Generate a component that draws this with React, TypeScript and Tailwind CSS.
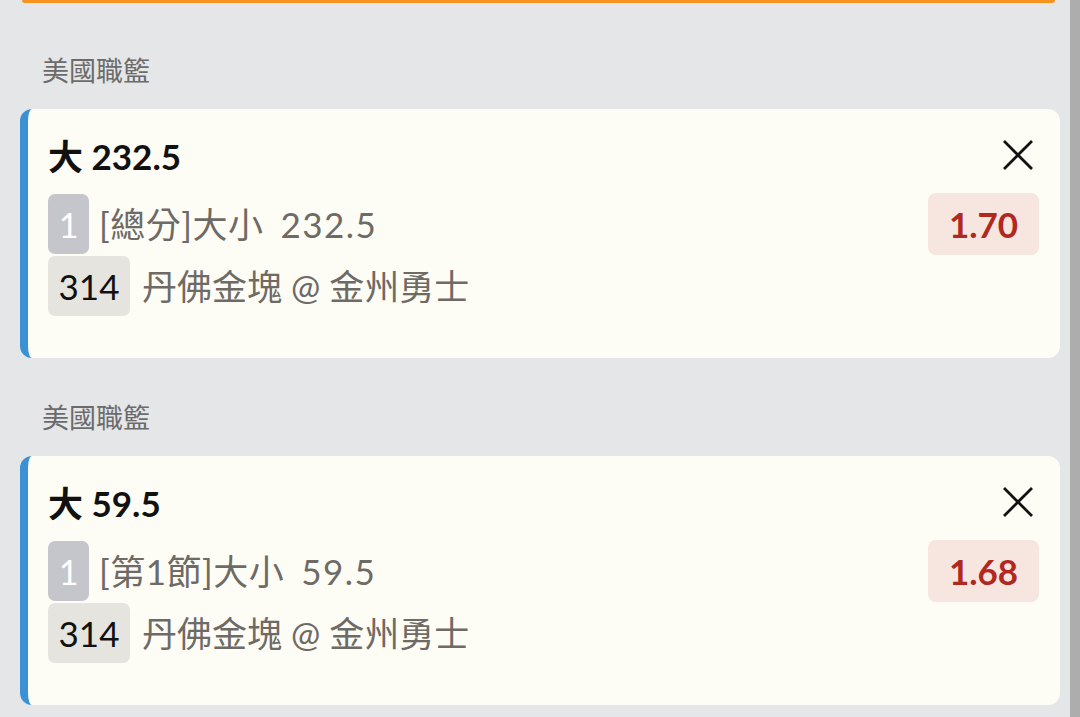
const font = { fontFamily: 'Lato, "Noto Sans CJK TC", sans-serif' };

type Bet = {
  league: string;
  title: string;
  period: string;
  line: string;
  odds: string;
  code: string;
  match: string;
};

const bets: Bet[] = [
  {
    league: "美國職籃",
    title: "大 232.5",
    period: "[總分]大小",
    line: "232.5",
    odds: "1.70",
    code: "314",
    match: "丹佛金塊 @ 金州勇士",
  },
  {
    league: "美國職籃",
    title: "大 59.5",
    period: "[第1節]大小",
    line: "59.5",
    odds: "1.68",
    code: "314",
    match: "丹佛金塊 @ 金州勇士",
  },
];

function CloseIcon() {
  return (
    <svg width="32" height="32" viewBox="0 0 32 32" fill="none">
      <path d="M2 2L30 30M30 2L2 30" stroke="#111" strokeWidth="2.8" />
    </svg>
  );
}

function BetCard({ bet }: { bet: Bet }) {
  return (
    <section>
      <div className="h-[36px] pl-[22px] text-[27px] leading-[36px] text-[#6b6b6b]">
        {bet.league}
      </div>
      <div className="mt-[20px] flex h-[249px] rounded-[12px] border-l-[8px] border-[#3a92d5] bg-[#fefdf5] pb-[40px] pl-[20px] pr-[21px] pt-[26px]">
        <div className="flex flex-1 flex-col">
          <div className="h-[42px] text-[35px] font-bold leading-[42px] text-[#111]">
            {bet.title}
          </div>
          <div className="mt-[17px] flex items-center text-[35px] text-[#6e6a66]">
            <span className="flex h-[60px] w-[41px] items-center justify-center rounded-[7px] bg-[#c5c5cc] text-[34px] text-white">
              1
            </span>
            <span className="ml-[10px] tracking-[0.5px]">{bet.period}</span>
            <span className="ml-[17px] tracking-[1.5px]">{bet.line}</span>
          </div>
          <div className="mt-[2px] flex items-center text-[35px] text-[#6e6a66]">
            <span className="flex h-[60px] w-[82px] items-center justify-center rounded-[7px] bg-[#e6e4de] text-[#111]">
              {bet.code}
            </span>
            <span className="ml-[12px]">{bet.match}</span>
          </div>
        </div>
        <div className="flex flex-col items-end">
          <div className="mr-[5px] mt-[4px] h-[32px]">
            <CloseIcon />
          </div>
          <div className="mt-[22px] flex h-[62px] w-[111px] items-center justify-center rounded-[8px] bg-[#f6e6df] text-[35px] font-bold text-[#b0281e]">
            {bet.odds}
          </div>
        </div>
      </div>
    </section>
  );
}

export default function App() {
  return (
    <div className="flex h-[717px] w-[1080px] overflow-hidden bg-[#e5e6e8]" style={font}>
      <div className="min-w-0 flex-1 pl-[20px] pr-[10px]">
        <div className="ml-[2px] mr-[5px] h-[3px] rounded-b-full bg-[#f7931e]" />
        <div className="flex flex-col gap-[42px] pt-[50px]">
          {bets.map((bet, i) => (
            <BetCard key={i} bet={bet} />
          ))}
        </div>
      </div>
      <div className="w-[10px] shrink-0 bg-[#adadad]" />
    </div>
  );
}
